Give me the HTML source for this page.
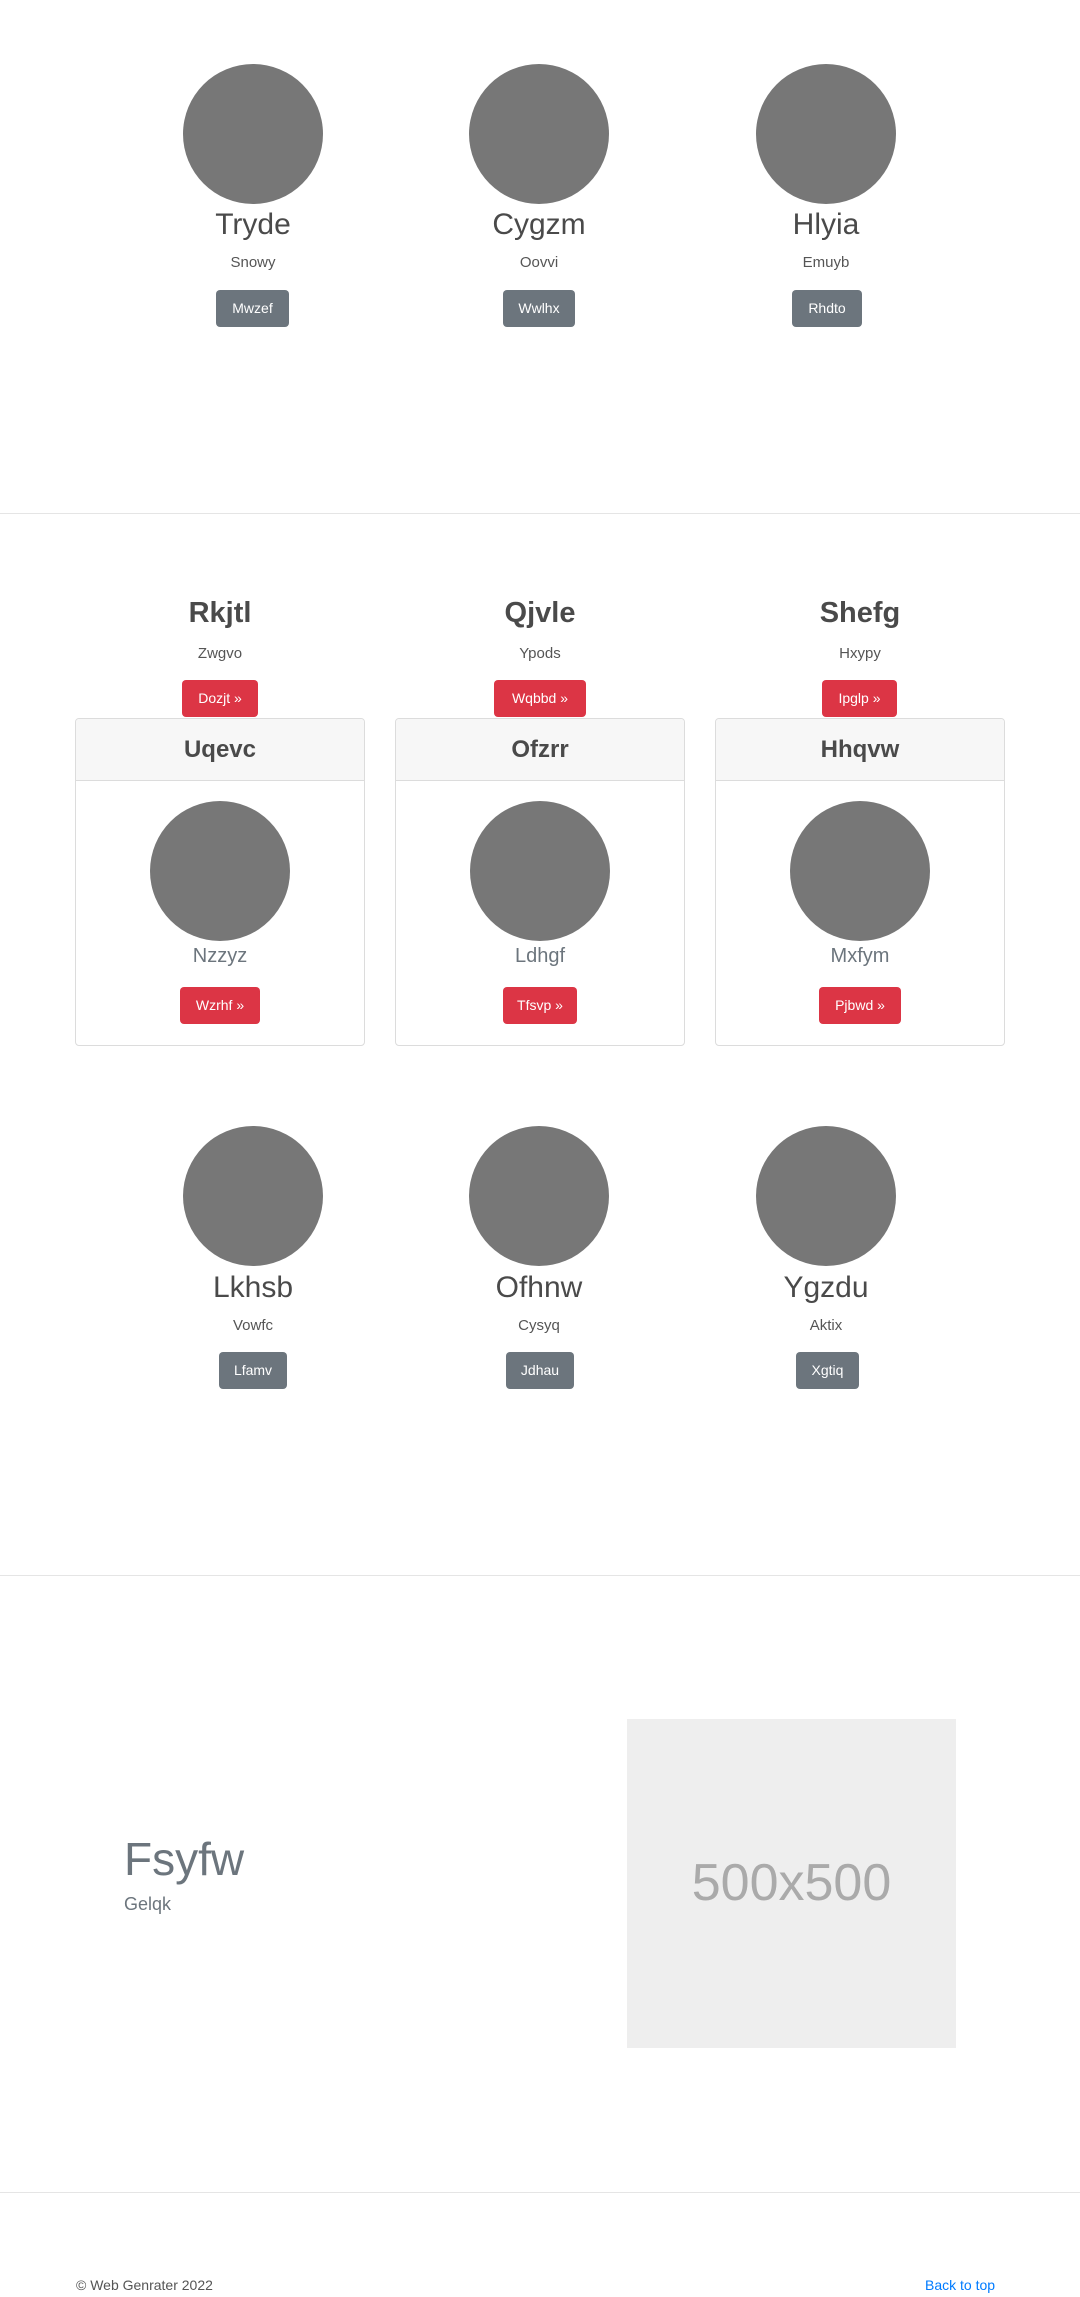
<!DOCTYPE html>
<html><head><meta charset="utf-8"><style>
*{margin:0;padding:0;box-sizing:border-box}
body{width:1080px;height:2297px;position:relative;background:#fff;font-family:"Liberation Sans",sans-serif;color:#212529;overflow:hidden}
.a{position:absolute}
.c{position:absolute;width:140px;height:140px;border-radius:50%;background:#777}
.t{position:absolute;width:300px;text-align:center}
.btn{position:absolute;color:#fff;font-size:14px;border-radius:4px;text-align:center;line-height:37px;height:37px}
.g{background:#6c757d}
.r{background:#dc3545}
.hr{position:absolute;left:0;width:1080px;height:1px;background:#e5e5e5}
.card{position:absolute;top:718px;width:290px;height:328px;border:1px solid #dcdcdc;border-radius:4px;overflow:hidden}
.ch{height:62px;background:#f7f7f7;border-bottom:1px solid #dcdcdc;text-align:center;font-size:24px;font-weight:bold;color:#4a4a4a;line-height:62px}
.n{font-size:30px;color:#4a4a4a}
.s{font-size:15px;color:#555}
</style></head><body>

<div class="c" style="left:183px;top:64px"></div>
<div class="c" style="left:469px;top:64px"></div>
<div class="c" style="left:756px;top:64px"></div>
<div class="t n" style="left:103px;top:208px">Tryde</div>
<div class="t n" style="left:389px;top:208px">Cygzm</div>
<div class="t n" style="left:676px;top:208px">Hlyia</div>
<div class="t s" style="left:103px;top:254px">Snowy</div>
<div class="t s" style="left:389px;top:254px">Oovvi</div>
<div class="t s" style="left:676px;top:254px">Emuyb</div>
<div class="btn g" style="left:216px;top:290px;width:73px">Mwzef</div>
<div class="btn g" style="left:503px;top:290px;width:72px">Wwlhx</div>
<div class="btn g" style="left:792px;top:290px;width:70px">Rhdto</div>

<div class="hr" style="top:513px"></div>

<div class="t" style="left:70px;top:597px;font-size:29px;font-weight:bold;color:#4a4a4a">Rkjtl</div>
<div class="t" style="left:390px;top:597px;font-size:29px;font-weight:bold;color:#4a4a4a">Qjvle</div>
<div class="t" style="left:710px;top:597px;font-size:29px;font-weight:bold;color:#4a4a4a">Shefg</div>
<div class="t s" style="left:70px;top:645px">Zwgvo</div>
<div class="t s" style="left:390px;top:645px">Ypods</div>
<div class="t s" style="left:710px;top:645px">Hxypy</div>
<div class="btn r" style="left:182px;top:680px;width:76px">Dozjt »</div>
<div class="btn r" style="left:494px;top:680px;width:92px">Wqbbd »</div>
<div class="btn r" style="left:822px;top:680px;width:75px">Ipglp »</div>

<div class="card" style="left:75px"><div class="ch">Uqevc</div></div>
<div class="card" style="left:395px"><div class="ch">Ofzrr</div></div>
<div class="card" style="left:715px"><div class="ch">Hhqvw</div></div>
<div class="c" style="left:150px;top:801px"></div>
<div class="c" style="left:470px;top:801px"></div>
<div class="c" style="left:790px;top:801px"></div>
<div class="t" style="left:70px;top:945px;font-size:20px;color:#6c757d">Nzzyz</div>
<div class="t" style="left:390px;top:945px;font-size:20px;color:#6c757d">Ldhgf</div>
<div class="t" style="left:710px;top:945px;font-size:20px;color:#6c757d">Mxfym</div>
<div class="btn r" style="left:180px;top:987px;width:80px">Wzrhf »</div>
<div class="btn r" style="left:503px;top:987px;width:74px">Tfsvp »</div>
<div class="btn r" style="left:819px;top:987px;width:82px">Pjbwd »</div>

<div class="c" style="left:183px;top:1126px"></div>
<div class="c" style="left:469px;top:1126px"></div>
<div class="c" style="left:756px;top:1126px"></div>
<div class="t n" style="left:103px;top:1271px">Lkhsb</div>
<div class="t n" style="left:389px;top:1271px">Ofhnw</div>
<div class="t n" style="left:676px;top:1271px">Ygzdu</div>
<div class="t s" style="left:103px;top:1317px">Vowfc</div>
<div class="t s" style="left:389px;top:1317px">Cysyq</div>
<div class="t s" style="left:676px;top:1317px">Aktix</div>
<div class="btn g" style="left:219px;top:1352px;width:68px">Lfamv</div>
<div class="btn g" style="left:506px;top:1352px;width:68px">Jdhau</div>
<div class="btn g" style="left:796px;top:1352px;width:63px">Xgtiq</div>

<div class="hr" style="top:1575px"></div>

<div class="a" style="left:124px;top:1832px;font-size:46px;color:#6c757d">Fsyfw</div>
<div class="a" style="left:124px;top:1894px;font-size:18px;color:#6c757d">Gelqk</div>
<div class="a" style="left:627px;top:1719px;width:329px;height:329px;background:#eee;color:#aaa;font-size:52px;text-align:center;line-height:329px">500x500</div>

<div class="hr" style="top:2192px"></div>

<div class="a" style="left:76px;top:2277px;font-size:14px;color:#555">© Web Genrater 2022</div>
<div class="a" style="left:925px;top:2277px;font-size:14px;color:#007bff">Back to top</div>
</body></html>
